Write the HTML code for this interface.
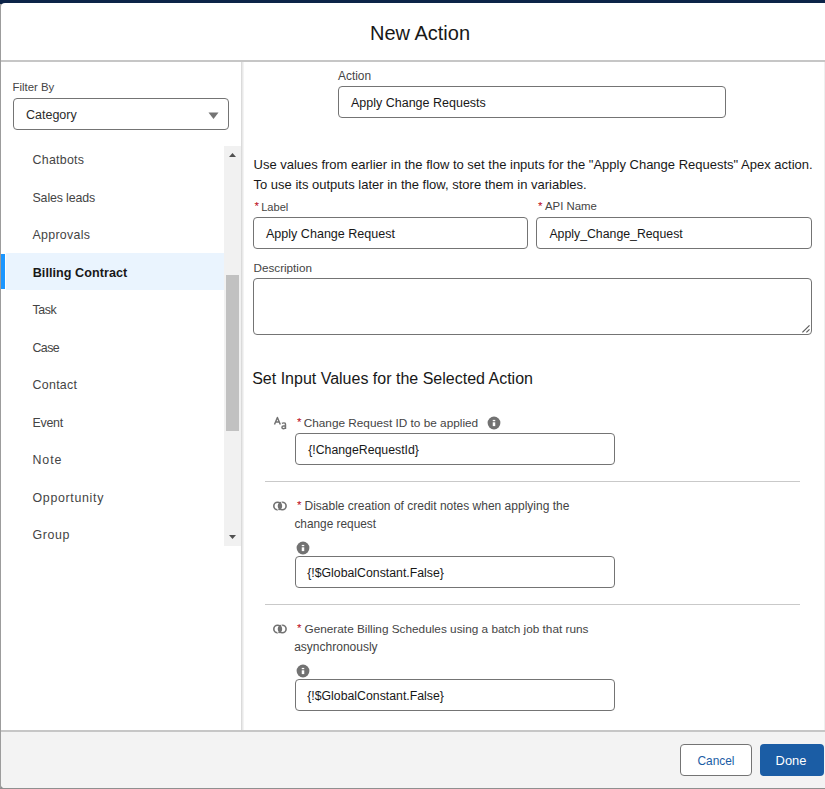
<!DOCTYPE html>
<html><head><meta charset="utf-8"><style>
html,body{margin:0;padding:0;width:825px;height:789px;overflow:hidden;background:#8f8f8f}
body{position:relative;font-family:"Liberation Sans",sans-serif}
.t{position:absolute;white-space:nowrap;line-height:normal}
</style></head><body>
<div style="position:absolute;left:0px;top:0px;width:825px;height:789px;box-sizing:border-box;background:#8f8f8f"></div>
<div style="position:absolute;left:0px;top:0px;width:825px;height:4px;box-sizing:border-box;background:#0c2448"></div>
<div style="position:absolute;left:0px;top:4px;width:1px;height:784px;box-sizing:border-box;background:#9c9c9c"></div>
<div style="position:absolute;left:1px;top:3px;width:824px;height:785px;box-sizing:border-box;background:#fff;border-radius:4px 0 0 4px"></div>
<div style="position:absolute;left:1px;top:60px;width:824px;height:2px;box-sizing:border-box;background:#c6c6c6"></div>
<div class="t" style="left:370px;top:21.60px;font-size:20px;color:#181818;font-weight:normal;">New Action</div>
<div class="t" style="left:12.5px;top:81.38px;font-size:11.4px;color:#444444;font-weight:normal;">Filter By</div>
<div style="position:absolute;left:13px;top:98px;width:216px;height:32px;box-sizing:border-box;border:1px solid #747474;border-radius:4px;background:#fff"></div>
<div class="t" style="left:26px;top:108.09px;font-size:12.5px;color:#2b2b2b;font-weight:normal;">Category</div>
<svg style="position:absolute;left:208px;top:112px" width="12" height="8"><path d="M0.5 0.5 L10.5 0.5 L5.5 7 Z" fill="#747474"/></svg>
<div style="position:absolute;left:6px;top:253px;width:218px;height:37px;box-sizing:border-box;background:#eaf4fe"></div>
<div style="position:absolute;left:1px;top:254px;width:4px;height:35px;box-sizing:border-box;background:#1b96ff"></div>
<div class="t" style="left:32.5px;top:152.98px;font-size:12.4px;color:#444444;font-weight:normal;letter-spacing:0.27px">Chatbots</div>
<div class="t" style="left:32.5px;top:190.50px;font-size:12.4px;color:#444444;font-weight:normal;letter-spacing:-0.14px">Sales leads</div>
<div class="t" style="left:32.5px;top:228.02px;font-size:12.4px;color:#444444;font-weight:normal;letter-spacing:0.29px">Approvals</div>
<div class="t" style="left:32.7px;top:266.20px;font-size:12.6px;color:#181818;font-weight:bold;letter-spacing:0.05px">Billing Contract</div>
<div class="t" style="left:32.5px;top:303.06px;font-size:12.4px;color:#444444;font-weight:normal;letter-spacing:-0.43px">Task</div>
<div class="t" style="left:32.5px;top:340.58px;font-size:12.4px;color:#444444;font-weight:normal;letter-spacing:-0.6px">Case</div>
<div class="t" style="left:32.5px;top:378.10px;font-size:12.4px;color:#444444;font-weight:normal;letter-spacing:0.3px">Contact</div>
<div class="t" style="left:32.5px;top:415.62px;font-size:12.4px;color:#444444;font-weight:normal;letter-spacing:-0.25px">Event</div>
<div class="t" style="left:32.5px;top:453.14px;font-size:12.4px;color:#444444;font-weight:normal;letter-spacing:0.9px">Note</div>
<div class="t" style="left:32.5px;top:490.66px;font-size:12.4px;color:#444444;font-weight:normal;letter-spacing:0.68px">Opportunity</div>
<div class="t" style="left:32.5px;top:528.18px;font-size:12.4px;color:#444444;font-weight:normal;letter-spacing:0.6px">Group</div>
<div style="position:absolute;left:224px;top:146px;width:17px;height:400px;box-sizing:border-box;background:#f1f1f1"></div>
<div style="position:absolute;left:226px;top:275px;width:13px;height:156px;box-sizing:border-box;background:#c1c1c1"></div>
<svg style="position:absolute;left:228px;top:152px" width="10" height="6"><path d="M1 5 L8 5 L4.5 1 Z" fill="#505050"/></svg>
<svg style="position:absolute;left:228px;top:534px" width="10" height="6"><path d="M1 1 L8 1 L4.5 5 Z" fill="#505050"/></svg>
<div style="position:absolute;left:241px;top:62px;width:3px;height:668px;box-sizing:border-box;background:linear-gradient(to right,#d2d2d2,#e6e6e6 40%,#f8f8f8)"></div>
<div style="position:absolute;left:824px;top:62px;width:1px;height:668px;box-sizing:border-box;background:#efefef"></div>
<div class="t" style="left:338px;top:69.23px;font-size:11.9px;color:#444444;font-weight:normal;">Action</div>
<div style="position:absolute;left:338px;top:86px;width:388px;height:32px;box-sizing:border-box;border:1px solid #747474;border-radius:4px"></div>
<div class="t" style="left:351px;top:95.69px;font-size:12.5px;color:#181818;font-weight:normal;">Apply Change Requests</div>
<div class="t" style="left:253.5px;top:157.13px;font-size:13px;color:#181818;font-weight:normal;">Use values from earlier in the flow to set the inputs for the "Apply Change Requests" Apex action.</div>
<div class="t" style="left:253.5px;top:177.04px;font-size:13px;color:#181818;font-weight:normal;">To use its outputs later in the flow, store them in variables.</div>
<div class="t" style="left:254.5px;top:200.29px;font-size:11.5px;color:#ba0517;font-weight:normal;">*</div>
<div class="t" style="left:261.2px;top:200.65px;font-size:11.1px;color:#444444;font-weight:normal;">Label</div>
<div style="position:absolute;left:253px;top:217px;width:275px;height:32px;box-sizing:border-box;border:1px solid #747474;border-radius:4px"></div>
<div class="t" style="left:266px;top:227.24px;font-size:12.55px;color:#181818;font-weight:normal;">Apply Change Request</div>
<div class="t" style="left:538px;top:200.29px;font-size:11.5px;color:#ba0517;font-weight:normal;">*</div>
<div class="t" style="left:545px;top:200.38px;font-size:11.4px;color:#444444;font-weight:normal;">API Name</div>
<div style="position:absolute;left:536px;top:217px;width:276px;height:32px;box-sizing:border-box;border:1px solid #747474;border-radius:4px"></div>
<div class="t" style="left:549.4px;top:227.47px;font-size:12.3px;color:#181818;font-weight:normal;">Apply_Change_Request</div>
<div class="t" style="left:253.5px;top:261.21px;font-size:11.7px;color:#444444;font-weight:normal;">Description</div>
<div style="position:absolute;left:253px;top:278px;width:559px;height:57px;box-sizing:border-box;border:1px solid #747474;border-radius:4px"></div>
<svg style="position:absolute;left:800px;top:323px" width="12" height="12"><path d="M2.4 9.4 L9.5 2.3 M6.4 9.4 L9.5 6.3" stroke="#5a5a5a" stroke-width="1.2" fill="none"/></svg>
<div class="t" style="left:252.2px;top:369.52px;font-size:16px;color:#181818;font-weight:normal;">Set Input Values for the Selected Action</div>
<svg style="position:absolute;left:270px;top:412px" width="20" height="20"><g fill="none" stroke="#727272" stroke-width="1.45" stroke-linejoin="round"><path d="M4.5 12.6 L7.4 5.4 L10.3 12.6 M5.6 9.9 L9.2 9.9"/><path d="M11.9 11.4 Q13.6 10.5 15 11.1 Q15.5 11.6 15.5 12.7 L15.5 16.9 M15.5 13.9 L13.6 13.9 Q11.9 14 11.9 15.4 Q12 16.7 13.5 16.7 Q14.9 16.5 15.5 15.6"/></g></svg>
<div class="t" style="left:297px;top:415.99px;font-size:11.5px;color:#ba0517;font-weight:normal;">*</div>
<div class="t" style="left:303.7px;top:415.72px;font-size:11.8px;color:#444444;font-weight:normal;">Change Request ID to be applied</div>
<svg style="position:absolute;left:487px;top:415.7px" width="14" height="14"><circle cx="7" cy="7" r="6.4" fill="#727272"/><rect x="5.75" y="3.9" width="2.5" height="1.3" fill="#fff"/><rect x="5.75" y="6.3" width="2.5" height="3.8" fill="#fff"/></svg>
<div style="position:absolute;left:295px;top:433px;width:320px;height:32px;box-sizing:border-box;border:1px solid #747474;border-radius:4px"></div>
<div class="t" style="left:308.2px;top:443.27px;font-size:12.3px;color:#181818;font-weight:normal;">{!ChangeRequestId}</div>
<div style="position:absolute;left:265px;top:481px;width:535px;height:1px;box-sizing:border-box;background:#c9c9c9"></div>
<svg style="position:absolute;left:272px;top:500px" width="16" height="12"><circle cx="5.6" cy="6" r="3.8" stroke="#727272" stroke-width="1.6" fill="none"/><circle cx="10.3" cy="6" r="3.8" stroke="#727272" stroke-width="1.6" fill="none"/><path d="M7.95 3 A3.8 3.8 0 0 1 7.95 9 A3.8 3.8 0 0 1 7.95 3 Z" fill="#727272"/><path d="M8.5 0.5 L10 3 M5.4 8.7 L6.8 11.2" stroke="#fff" stroke-width="0.9"/></svg>
<div class="t" style="left:297px;top:499.19px;font-size:11.5px;color:#ba0517;font-weight:normal;">*</div>
<div class="t" style="left:304.5px;top:498.74px;font-size:12px;color:#444444;font-weight:normal;">Disable creation of credit notes when applying the</div>
<div class="t" style="left:294.4px;top:516.88px;font-size:11.85px;color:#444444;font-weight:normal;">change request</div>
<svg style="position:absolute;left:296px;top:540.7px" width="14" height="14"><circle cx="7" cy="7" r="6.4" fill="#727272"/><rect x="5.75" y="3.9" width="2.5" height="1.3" fill="#fff"/><rect x="5.75" y="6.3" width="2.5" height="3.8" fill="#fff"/></svg>
<div style="position:absolute;left:295px;top:556px;width:320px;height:32px;box-sizing:border-box;border:1px solid #747474;border-radius:4px"></div>
<div class="t" style="left:307.2px;top:566.37px;font-size:12.3px;color:#181818;font-weight:normal;">{!$GlobalConstant.False}</div>
<div style="position:absolute;left:265px;top:604px;width:535px;height:1px;box-sizing:border-box;background:#c9c9c9"></div>
<svg style="position:absolute;left:272px;top:623px" width="16" height="12"><circle cx="5.6" cy="6" r="3.8" stroke="#727272" stroke-width="1.6" fill="none"/><circle cx="10.3" cy="6" r="3.8" stroke="#727272" stroke-width="1.6" fill="none"/><path d="M7.95 3 A3.8 3.8 0 0 1 7.95 9 A3.8 3.8 0 0 1 7.95 3 Z" fill="#727272"/><path d="M8.5 0.5 L10 3 M5.4 8.7 L6.8 11.2" stroke="#fff" stroke-width="0.9"/></svg>
<div class="t" style="left:297px;top:622.29px;font-size:11.5px;color:#ba0517;font-weight:normal;">*</div>
<div class="t" style="left:304.5px;top:622.02px;font-size:11.8px;color:#444444;font-weight:normal;">Generate Billing Schedules using a batch job that runs</div>
<div class="t" style="left:294.2px;top:639.64px;font-size:12px;color:#444444;font-weight:normal;">asynchronously</div>
<svg style="position:absolute;left:296px;top:664px" width="14" height="14"><circle cx="7" cy="7" r="6.4" fill="#727272"/><rect x="5.75" y="3.9" width="2.5" height="1.3" fill="#fff"/><rect x="5.75" y="6.3" width="2.5" height="3.8" fill="#fff"/></svg>
<div style="position:absolute;left:295px;top:679px;width:320px;height:32px;box-sizing:border-box;border:1px solid #747474;border-radius:4px"></div>
<div class="t" style="left:307.2px;top:689.37px;font-size:12.3px;color:#181818;font-weight:normal;">{!$GlobalConstant.False}</div>
<div style="position:absolute;left:1px;top:730px;width:824px;height:2px;box-sizing:border-box;background:#c6c6c6"></div>
<div style="position:absolute;left:1px;top:732px;width:824px;height:56px;box-sizing:border-box;background:#f3f3f3;border-radius:0 0 0 4px"></div>
<div style="position:absolute;left:680px;top:744px;width:72px;height:32px;box-sizing:border-box;background:#fff;border:1px solid #747474;border-radius:4px"></div>
<div class="t" style="left:697.5px;top:754.23px;font-size:11.9px;color:#1b5da5;font-weight:normal;">Cancel</div>
<div style="position:absolute;left:760px;top:744px;width:64px;height:32px;box-sizing:border-box;background:#1b5da5;border-radius:4px"></div>
<div class="t" style="left:775.6px;top:753.33px;font-size:12.9px;color:#fff;font-weight:normal;">Done</div>
</body></html>
